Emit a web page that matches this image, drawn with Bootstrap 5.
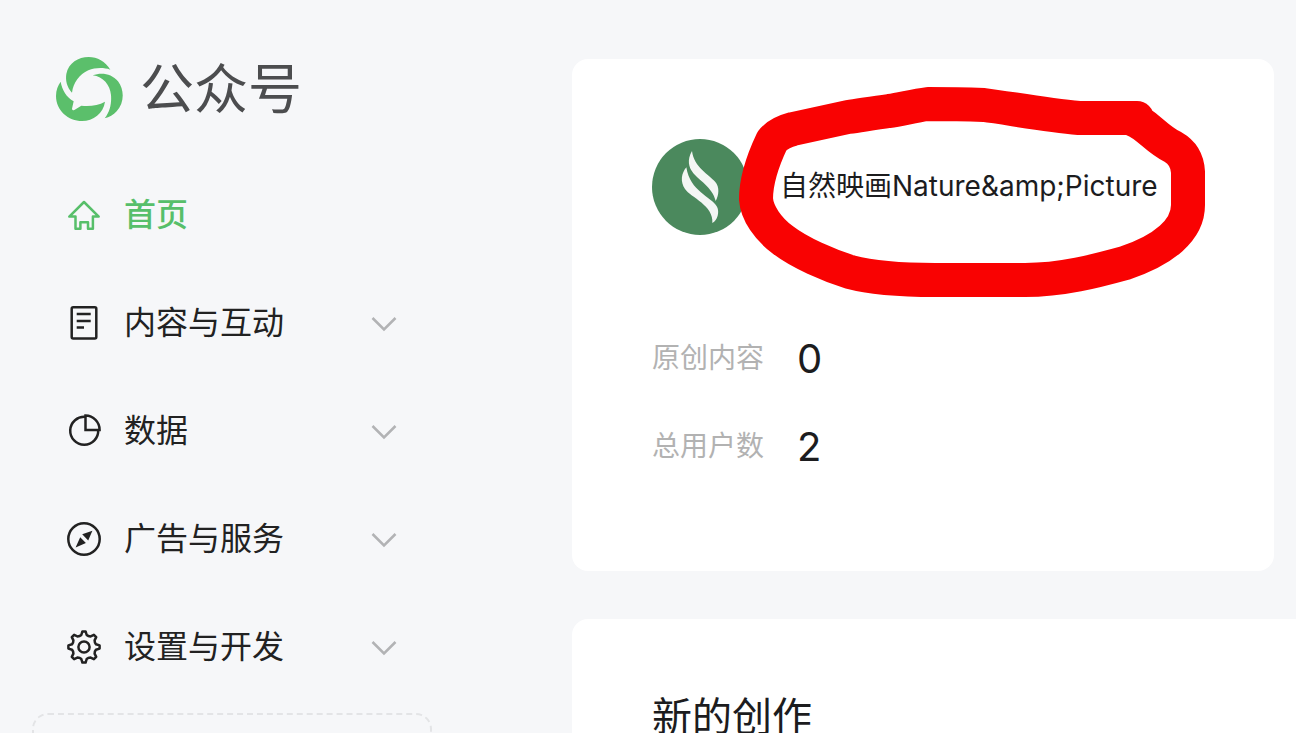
<!DOCTYPE html>
<html lang="zh-CN">
<head>
<meta charset="utf-8">
<meta name="viewport" content="width=device-width, initial-scale=1">
<title>公众号</title>
<link href="https://cdn.jsdelivr.net/npm/bootstrap@5.3.0/dist/css/bootstrap.min.css" rel="stylesheet">
<style>
  body { background: #f6f7f9; color: #1c1c1e; font-family: Inter, "Noto Sans CJK SC", sans-serif; }
  .side { width: 432px; padding: 56px 0 0 32px; }
  .brand { height: 66px; margin: 0 0 39px 24px; gap: 17px; color: #4c4d4f; font-size: 54px; line-height: 66px; }
  .brand span { padding-top: 2px; }
  .side-link { height: 108px; padding: 0 34px; gap: 22px; font-size: 32px; line-height: 48px; color: #222; background: none; border: 0; }
  .side-link.current { color: #57bf6a; font-weight: 500; }
  .side-link svg { flex: none; fill: none; stroke: currentColor; stroke-width: 2.5; }
  .side-link .chevron { stroke: #b2b3b5; }
  .custom-box { height: 120px; margin-top: 12px; border: 2px dashed #e3e4e6; border-radius: 16px; }
  .content { padding-top: 59px; margin-left: 140px; gap: 48px; }
  .panel { background: #fff; border-radius: 16px; padding: 80px; }
  .account { margin-right: 22px; }
  .profile { gap: 32px; height: 96px; font-size: 28px; line-height: 40px; margin-bottom: 80px; }
  .profile span { padding-bottom: 2px; }
  .stat { height: 88px; gap: 33px; }
  .stat dt { font-size: 28px; line-height: 40px; font-weight: 400; color: #b2b2b2; padding-bottom: 2px; }
  .stat dd { font-size: 40px; line-height: 48px; }
  .scribble { left: 80px; top: -59px; pointer-events: none; }
  .create { border-radius: 16px 0 0 0; padding-top: 68px; }
  .create h2 { font-size: 40px; line-height: 60px; font-weight: 400; }
</style>
</head>
<body>
<div class="d-flex vh-100 overflow-hidden">
  <aside class="side flex-shrink-0">
    <div class="brand d-flex align-items-center">
      <svg width="67" height="64" viewBox="48 51 201 192" fill="#5bbf6b" aria-hidden="true">
        <path d="M96 158C80 141 76 120 79 102C86 68 115 51 146 51C172 51 196 64 211 89C190 82 165 83 145 91C118 103 100 128 96 158Z"/>
        <path d="M158 106C185 96 215 101 234 124C254 150 253 189 230 214C220 225 208 232 194 235C210 215 215 190 213 165C210 135 190 110 158 106Z"/>
        <path d="M62 125C66 150 80 172 101 184L96 206Q97 213 103 210L124 197C150 200 175 196 195 185C190 220 160 243 126 243C85 243 48 212 48 168C48 150 54 136 62 125Z"/>
      </svg>
      <span>公众号</span>
    </div>
    <nav class="d-flex flex-column">
      <a href="#" class="side-link current d-flex align-items-center text-decoration-none" aria-current="page">
        <svg width="36" height="36" viewBox="0 0 36 36"><path stroke-linejoin="round" d="M18 5L3.3 19.6H9.5V31.7H14.4V25.2H22V31.7H26.9V19.6H32.7Z"/></svg>
        <span>首页</span>
      </a>
      <button type="button" class="side-link d-flex align-items-center text-start">
        <svg width="36" height="36" viewBox="0 0 36 36"><rect x="5.7" y="2.3" width="24.6" height="31.2" rx="1.5"/><path d="M10.7 9H24.7M10.7 16H24.7M10.7 22.5H18"/></svg>
        <span class="flex-grow-1">内容与互动</span>
        <svg class="chevron" width="28" height="28" viewBox="0 0 28 28"><path d="M2.5 9L14 20.5L25.5 9"/></svg>
      </button>
      <button type="button" class="side-link d-flex align-items-center text-start">
        <svg width="36" height="36" viewBox="0 0 36 36"><path d="M19.5 3.8A14 14 0 1 0 32.2 17M19.5 2.5V17H33.6A14.3 14.3 0 0 0 19.5 2.5Z"/></svg>
        <span class="flex-grow-1">数据</span>
        <svg class="chevron" width="28" height="28" viewBox="0 0 28 28"><path d="M2.5 9L14 20.5L25.5 9"/></svg>
      </button>
      <button type="button" class="side-link d-flex align-items-center text-start">
        <svg width="36" height="36" viewBox="0 0 36 36"><circle cx="18" cy="18" r="15.7"/><path fill="currentColor" stroke="none" d="M26.4 9.8L16.2 13.2L22.2 19.6ZM9.6 26.4L14.2 16.2L19.9 21.9Z"/></svg>
        <span class="flex-grow-1">广告与服务</span>
        <svg class="chevron" width="28" height="28" viewBox="0 0 28 28"><path d="M2.5 9L14 20.5L25.5 9"/></svg>
      </button>
      <button type="button" class="side-link d-flex align-items-center text-start">
        <svg width="36" height="36" viewBox="-18 -18 36 36"><circle r="5.6"/><path stroke-linejoin="round" d="M-1.6-15.6H1.6L2.7-12Q4.4-10.5 6.6-10.6L9.9-12.2L12.2-9.9L10.6-6.6Q10.5-4.4 12-2.7L15.6-1.6V1.6L12 2.7Q10.5 4.4 10.6 6.6L12.2 9.9L9.9 12.2L6.6 10.6Q4.4 10.5 2.7 12L1.6 15.6H-1.6L-2.7 12Q-4.4 10.5-6.6 10.6L-9.9 12.2L-12.2 9.9L-10.6 6.6Q-10.5 4.4-12 2.7L-15.6 1.6V-1.6L-12-2.7Q-10.5-4.4-10.6-6.6L-12.2-9.9L-9.9-12.2L-6.6-10.6Q-4.4-10.5-2.7-12Z"/></svg>
        <span class="flex-grow-1">设置与开发</span>
        <svg class="chevron" width="28" height="28" viewBox="0 0 28 28"><path d="M2.5 9L14 20.5L25.5 9"/></svg>
      </button>
    </nav>
    <div class="custom-box"></div>
  </aside>

  <main class="content d-flex flex-column flex-grow-1">
    <section class="panel account">
      <div class="profile d-flex align-items-center position-relative">
        <svg class="flex-shrink-0" width="96" height="96" viewBox="36 177 288 288" aria-hidden="true">
          <circle cx="180" cy="321" r="144" fill="#4b895d"/>
          <path fill="#f4f6f4" d="M156 213C140 240 147 262 158 277C174 299 218 322 227 363C237 345 239 321 226 306C207 283 162 262 156 213ZM139 262C124 280 120 305 135 327C152 352 222 377 217 429C233 420 239 395 231 380C214 350 150 335 139 262Z"/>
        </svg>
        <span class="text-nowrap">自然映画Nature&amp;amp;Picture</span>
        <svg class="scribble position-absolute" width="480" height="224" viewBox="732 80 480 224" fill="none" stroke="#f90202" stroke-width="34" stroke-linecap="round" stroke-linejoin="round" aria-hidden="true">
          <path d="M1137 118H1079C1045 115 1008 108 984 105Q958 104 928 104C912 106 900 110 889 111C874 113 862 115 848 117L793 129Q778 133 772 141C763 160 756 182 756 199C757 213 768 229 783 240C800 253 828 265 850 272Q880 280 935 280H1025C1062 280 1096 271 1125 263C1164 250 1188 230 1188 205V172Q1187 155 1173 147C1155 138 1147 124 1132 119"/>
        </svg>
      </div>
      <dl class="mb-0">
        <div class="stat d-flex align-items-center"><dt>原创内容</dt><dd class="mb-0">0</dd></div>
        <div class="stat d-flex align-items-center"><dt>总用户数</dt><dd class="mb-0">2</dd></div>
      </dl>
    </section>
    <section class="panel create">
      <h2 class="mb-0">新的创作</h2>
    </section>
  </main>
</div>
<script src="https://cdn.jsdelivr.net/npm/bootstrap@5.3.0/dist/js/bootstrap.bundle.min.js"></script>
</body>
</html>
